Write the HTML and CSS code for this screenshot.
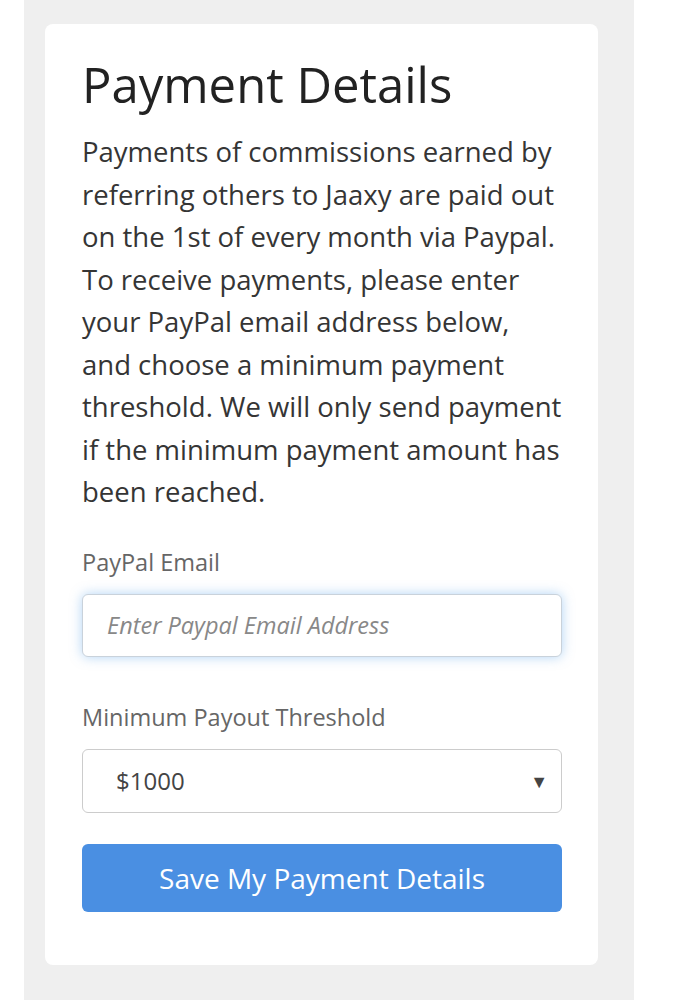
FILE: index.html
```html
<!DOCTYPE html>
<html>
<head>
<meta charset="utf-8">
<link rel="stylesheet" href="styles.css">
</head>
<body>
<div class="page">
  <div class="card">
    <h1 class="title">Payment Details</h1>
    <p class="intro">Payments of commissions earned by referring others to Jaaxy are paid out on the 1st of every month via Paypal. To receive payments, please enter your PayPal email address below, and choose a minimum payment threshold. We will only send payment if the minimum payment amount has been reached.</p>
    <div class="field">
      <label class="label">PayPal Email</label>
      <div class="input focused"><span class="placeholder">Enter Paypal Email Address</span></div>
    </div>
    <div class="field">
      <label class="label">Minimum Payout Threshold</label>
      <div class="input select"><span class="value">$1000</span><span class="caret">&#9660;</span></div>
    </div>
    <button class="btn">Save My Payment Details</button>
  </div>
</div>
</body>
</html>
```

FILE: styles.css
```css
html, body {
  margin: 0;
  padding: 0;
  background: #ffffff;
}
body {
  font-family: "Open Sans", "Liberation Sans", sans-serif;
  color: #333333;
}
.page {
  margin-left: 24px;
  width: 610px;
  min-height: 1000px;
  box-sizing: border-box;
  background: #efefef;
  padding: 24px 36px 0 21px;
}
.card {
  background: #ffffff;
  border-radius: 8px;
  padding: 32px 36px 53px 37px;
}
.title {
  margin: 0;
  font-size: 49px;
  font-weight: 500;
  line-height: 56px;
  color: #222222;
}
.intro {
  margin: 19px 0 0;
  font-size: 27.5px;
  line-height: 42.5px;
  color: #353535;
}
.field {
  margin-top: 33px;
}
.field + .field {
  margin-top: 45px;
}
.label {
  display: block;
  font-size: 23.5px;
  line-height: 30px;
  color: #666666;
  margin-bottom: 17px;
}
.input {
  height: 63px;
  box-sizing: border-box;
  border: 1px solid #cccccc;
  border-radius: 6px;
  background: #ffffff;
  display: flex;
  align-items: center;
  padding: 0 24px;
  font-size: 23.5px;
}
.focused {
  border-color: #c9d2db;
  box-shadow: 0 0 12px rgba(102, 170, 236, 0.5);
}
.placeholder {
  font-style: italic;
  color: #888888;
}
.select {
  height: 64px;
  justify-content: space-between;
  padding: 0 13px 0 33px;
  font-size: 24px;
}
.value {
  color: #444444;
}
.caret {
  font-size: 18px;
  color: #444444;
}
.btn {
  display: block;
  width: 100%;
  margin-top: 31px;
  height: 68px;
  border: 0;
  border-radius: 6px;
  background: #4a8fe2;
  color: #ffffff;
  font-family: "Open Sans", "Liberation Sans", sans-serif;
  font-size: 28px;
}
```
